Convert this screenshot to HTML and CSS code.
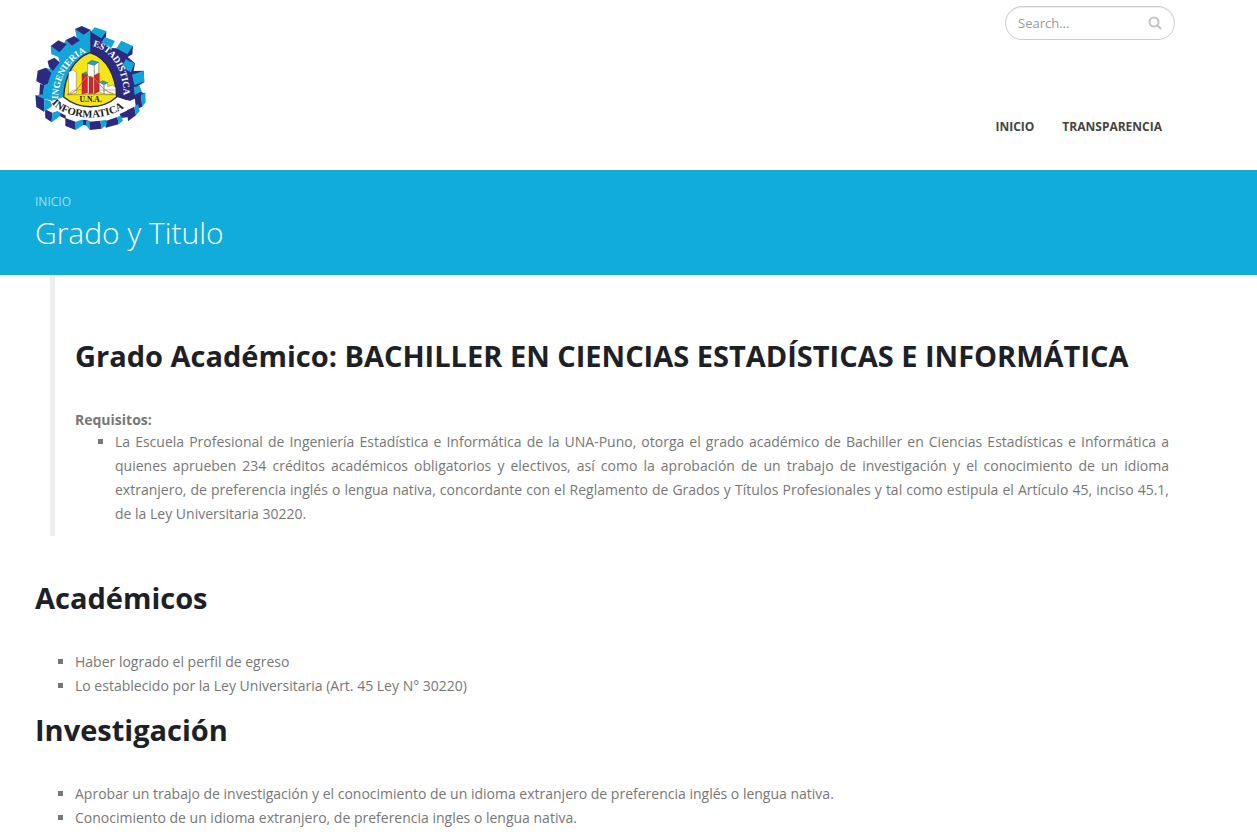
FILE: index.html
```html
<!DOCTYPE html>
<html lang="es">
<head>
<meta charset="utf-8">
<meta name="viewport" content="width=device-width, initial-scale=1">
<title>Grado y Titulo</title>
<link rel="stylesheet" href="styles.css">
</head>
<body>
<header class="header container">
  <a class="logo" href="#" aria-label="Ingeniería Estadística e Informática">
    <svg class="logo-image" viewBox="30 27 339 324" aria-hidden="true">
      <defs>
        <path id="arc-left" d="M99 253C100 190 132 130 196 107"/>
        <path id="arc-right" d="M203 93C262 108 298 166 296 254"/>
        <path id="arc-bottom" d="M80 265C128 321 262 322 316 263"/>
      </defs>
      <path fill="#14a5d8" d="M197 45 150 42 155 68 140 92 122 75 103 110 77 93 79 118 100 126 104 142 68 138 76 162 62 158 60 200 38 198 58 210 54 236 32 242 80 262 116 250 197 120Z"/>
      <path fill="#2c2a80" d="M197 49 229 68 244 48 243 68 258 99 274 100 324 93 322 118 308 126 330 145 326 168 356 167 358 202 340 212 350 232 362 236 318 262 260 240 197 120Z"/>
      <path fill="#fff" d="M76 256 58 252 60 283 82 293 107 287 121 309 152 320 193 320 228 317 242 319 277 306 284 297 328 275 334 250 318 256Z"/>
      <g fill="#2c2a80">
        <path d="M150 42 170 33 197 45 176 59Z"/>
        <path d="M122 75 148 63 165 76 140 92Z"/>
        <path d="M77 93 100 76 125 88 103 112Z"/>
        <path d="M68 138 88 128 104 142 84 168 72 156Z"/>
        <path d="M38 167 62 158 79 174 68 206 56 211 34 198Z"/>
        <path d="M45 207 58 210 54 238 43 240Z"/>
        <path d="M31 240 58 252 57 290 34 276Z"/>
        <path d="M60 283 82 293 80 322 61 309Z"/>
        <path d="M104 288 122 296 122 312 104 303Z"/>
        <path d="M121 309 152 320 152 345 121 333Z"/>
        <path d="M173 313 194 318 194 332 173 330Z"/>
        <path d="M193 320 226 317 230 341 194 345Z"/>
        <path d="M240 319 277 306 281 328 242 338Z"/>
        <path d="M284 297 310 285 314 306 288 309Z"/>
        <path d="M306 286 328 275 333 301 309 319Z"/>
        <path d="M329 246 348 240 352 275 333 283Z"/>
      </g>
      <g fill="#14a5d8">
        <path d="M197 50 209 37 244 48 229 69Z"/>
        <path d="M224 89 240 66 270 78 258 100Z"/>
        <path d="M274 100 289 77 324 93 307 118Z"/>
        <path d="M290 157 302 133 328 145 318 172Z"/>
        <path d="M321 179 356 167 358 200 328 210Z"/>
        <path d="M326 216 344 212 350 229 329 240Z"/>
        <path d="M348 240 361 232 362 262 352 275Z"/>
        <path d="M58 252 80 260 82 273 57 290Z"/>
        <path d="M82 293 106 285 106 303 80 322Z"/>
        <path d="M152 320 174 313 174 331 152 345Z"/>
        <path d="M183 318 194 319 194 345 183 331Z"/>
        <path d="M226 317 244 314 245 329 230 341Z"/>
        <path d="M277 306 288 301 294 317 281 328Z"/>
        <path d="M328 275 339 268 344 288 333 301Z"/>
      </g>
      <path fill="#14a5d8" d="M197 70C124 85 81 165 78 258L116 246C119 181 145 132 197 114Z"/>
      <path fill="#2c2a80" d="M197 70C270 85 312 165 318 258L275 246C272 181 246 132 197 114Z"/>
      <path fill="#fff" d="M76 260 116 246C160 285 235 285 275 246L318 260C286 333 108 334 76 260Z"/>
      <path fill="#f4e51b" stroke="#2e2b32" stroke-width="4" d="M195 113C147 130 119 181 116 246 163 285 231 285 275 246 272 181 247 130 195 113Z"/>
      <path stroke="#222156" stroke-width="2" d="M197 48V113"/>
      <g stroke="#333" stroke-width="1">
        <path fill="#fff" d="M131 171 143 165 154 171V234L131 240Z"/>
        <path fill="#d9232e" d="M171 177 188 181V233L171 237Z"/>
        <path fill="#fff" d="M188 145 208 150V235H188Z"/>
        <path fill="#d9232e" d="M208 181 223 174V229L208 236Z"/>
        <path fill="#14a5d8" d="M187 145 200 136 221 142 208 151ZM171 177 184 170 188 180ZM223 202 234 197 248 203 237 210Z"/>
        <path fill="#fff" d="M223 202 237 210V237L223 230ZM237 210 248 203V215L263 210 272 218V237H237ZM208 151 221 142V174L208 181Z"/>
        <path fill="#d9232e" d="M192 186H204V235H192Z"/>
        <path fill="none" d="M126 239H274M126 239 145 225 171 224M208 236 223 225H270"/>
      </g>
      <path fill="none" stroke="#c78328" stroke-width="3" d="M130 239C169 226 172 184 192 184 218 184 221 226 265 236"/>
      <text class="logo-small" x="197" y="262">U.N.A.</text>
      <text class="logo-ring logo-ring-light"><textPath href="#arc-left">INGENIERIA</textPath></text>
      <text class="logo-ring logo-ring-light"><textPath href="#arc-right">ESTADISTICA</textPath></text>
      <text class="logo-ring"><textPath href="#arc-bottom">INFORMATICA</textPath></text>
    </svg>
  </a>
  <div class="header-side">
    <form class="search" role="search">
      <input class="search-input" type="search" placeholder="Search..." aria-label="Search">
      <button class="search-button" type="button" aria-label="Search">
        <svg class="search-icon" viewBox="0 0 14 14" aria-hidden="true"><circle cx="6" cy="6" r="4.5"/><path d="m9.3 9.3 3.2 3.2"/></svg>
      </button>
    </form>
    <nav class="nav">
      <a class="nav-link" href="#">INICIO</a>
      <a class="nav-link" href="#">TRANSPARENCIA</a>
    </nav>
  </div>
</header>
<section class="page-header">
  <div class="container">
    <a class="breadcrumb" href="#">INICIO</a>
    <h1 class="page-title">Grado y Titulo</h1>
  </div>
</section>
<main class="container">
  <blockquote class="degree">
    <h2 class="heading">Grado Académico: BACHILLER EN CIENCIAS ESTADÍSTICAS E INFORMÁTICA</h2>
    <strong class="label">Requisitos:</strong>
    <ul class="list">
      <li>La Escuela Profesional de Ingeniería Estadística e Informática de la UNA-Puno, otorga el grado académico de Bachiller en Ciencias Estadísticas e Informática a quienes aprueben 234 créditos académicos obligatorios y electivos, así como la aprobación de un trabajo de investigación y el conocimiento de un idioma extranjero, de preferencia inglés o lengua nativa, concordante con el Reglamento de Grados y Títulos Profesionales y tal como estipula el Artículo 45, inciso 45.1, de la Ley Universitaria 30220.</li>
    </ul>
  </blockquote>
  <section class="topic">
    <h2 class="heading">Académicos</h2>
    <ul class="list">
      <li>Haber logrado el perfil de egreso</li>
      <li>Lo establecido por la Ley Universitaria (Art. 45 Ley N° 30220)</li>
    </ul>
  </section>
  <section class="topic">
    <h2 class="heading">Investigación</h2>
    <ul class="list">
      <li>Aprobar un trabajo de investigación y el conocimiento de un idioma extranjero de preferencia inglés o lengua nativa.</li>
      <li>Conocimiento de un idioma extranjero, de preferencia ingles o lengua nativa.</li>
    </ul>
  </section>
</main>
</body>
</html>
```
FILE: styles.css
```css
* { box-sizing: border-box; }
body {
  margin: 0;
  background: #fff;
  color: #777;
  font: 14px/24px "Open Sans", Arial, sans-serif;
}
a { text-decoration: none; }
.container { padding: 0 82px 0 35px; }
.header {
  display: flex;
  justify-content: space-between;
  padding-top: 6px;
  padding-bottom: 31px;
}
.logo { padding: 18px 0 7px; }
.logo-image { display: block; width: 113px; height: 108px; }
.logo-ring { fill: #222; font: bold 32px "Liberation Serif", serif; }
.logo-ring-light { fill: #fff; font-size: 28px; }
.logo-small { fill: #222; font: bold 23px "Liberation Serif", serif; text-anchor: middle; }
.header-side {
  display: flex;
  flex-direction: column;
  align-items: flex-end;
  justify-content: space-between;
}
.search {
  display: flex;
  align-items: center;
  width: 170px;
  height: 34px;
  padding: 0 12px;
  border: 1px solid #ccc;
  border-radius: 20px;
  box-shadow: inset 0 1px 1px rgba(0, 0, 0, .075);
}
.search-input {
  flex: 1;
  min-width: 0;
  padding: 0;
  border: 0;
  outline: 0;
  background: none;
  color: #777;
  font: 13px/20px "Open Sans", Arial, sans-serif;
}
.search-input::placeholder { color: #999; }
.search-button { padding: 0; border: 0; background: none; cursor: pointer; }
.search-icon {
  display: block;
  width: 14px;
  height: 14px;
  fill: none;
  stroke: #c4c4c4;
  stroke-width: 2;
  stroke-linecap: round;
}
.nav { display: flex; gap: 28px; padding-right: 13px; }
.nav-link { color: #444; font-size: 12px; font-weight: 700; }
.page-header { padding: 20px 0 24px; background: #11acda; color: #fff; }
.breadcrumb { display: block; color: #a0def0; font-size: 12px; line-height: 24px; }
.page-title { margin: 0; font-size: 30px; font-weight: 300; line-height: 37px; }
.degree {
  margin: 0 0 40px 15px;
  padding: 59px 6px 10px 20px;
  border-left: 5px solid #eee;
}
.heading {
  margin: 0 0 32px;
  color: #1d2127;
  font-size: 29px;
  font-weight: 700;
  line-height: 44px;
}
.topic .heading { margin-bottom: 30px; }
.label { display: block; line-height: 20px; }
.list { margin: 0; padding-left: 40px; list-style: square; text-align: justify; }
.topic { padding-bottom: 10px; }
```
